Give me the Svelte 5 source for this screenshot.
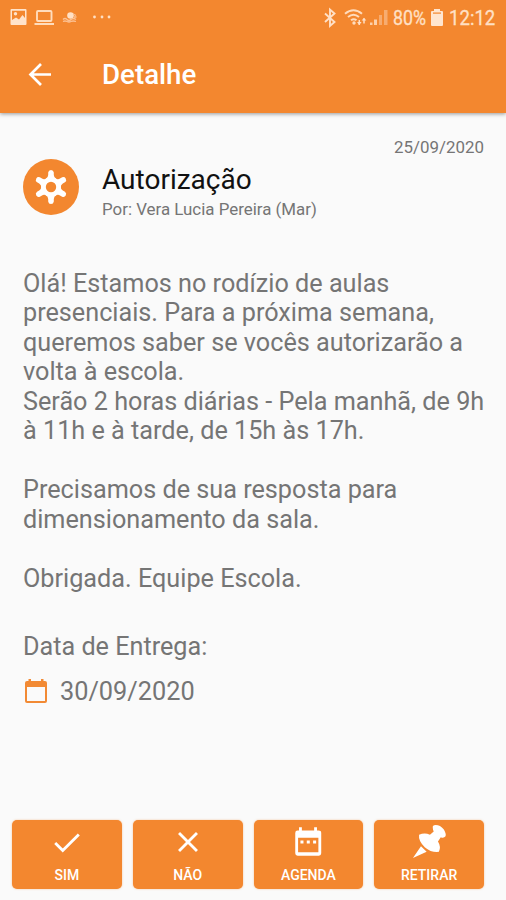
<script>
  const message = [
    'Olá! Estamos no rodízio de aulas',
    'presenciais. Para a próxima semana,',
    'queremos saber se vocês autorizarão a',
    'volta à escola.',
    'Serão 2 horas diárias - Pela manhã, de 9h',
    'à 11h e à tarde, de 15h às 17h.',
    '',
    'Precisamos de sua resposta para',
    'dimensionamento da sala.',
    '',
    'Obrigada. Equipe Escola.'
  ];
  const actions = [
    { id: 'yes', label: 'SIM' },
    { id: 'no', label: 'NÃO' },
    { id: 'agenda', label: 'AGENDA' },
    { id: 'remove', label: 'RETIRAR' }
  ];
</script>

<div class="screen">
  <header>
    <div class="status">
      <svg class="left" width="104" height="18" viewBox="0 0 104 18">
        <path fill="#ffe3cb" fill-rule="evenodd" d="M1.500 0h14q1 0 1 1v14q0 1-1 1h-14q-1 0-1-1V1q0-1 1-1zM2 1.700v9.300l4-2.500 3 2 3.500-4.500 2.500 3V1.700z" />
        <circle cx="5.500" cy="4.800" r="1.700" fill="#ffe3cb" />
        <rect x="27" y="2" width="14.500" height="10" rx="1" fill="none" stroke="#ffdcbc" stroke-width="1.900" />
        <path d="M24.500 15h19.500" stroke="#ffdcbc" stroke-width="2" />
        <circle cx="60.500" cy="6.500" r="3.300" fill="#ffe0c5" />
        <path d="M53 10.500q2-2 4 0t4 0 5 0M53 12.500q2-1 4 0t4 0 5 0M63 5l3 1.500M64 8h2.500" fill="none" stroke="#fcc193" stroke-width="1.300" />
        <circle cx="84.500" cy="8" r="1.400" fill="#ffdfc3" />
        <circle cx="92" cy="8" r="1.400" fill="#ffdfc3" />
        <circle cx="99" cy="8" r="1.400" fill="#ffdfc3" />
      </svg>
      <div class="right">
        <svg width="66" height="20" viewBox="0 0 66 20">
          <path d="M1 5.500l9.500 8.500-4.500 4V1.500l4.500 4L1 14" fill="none" stroke="#ffe0c6" stroke-width="1.900" />
          <path d="M21 5.800q8.500-7 17 0M24 9q5.500-4.500 11 0M27 12.300q2.700-2 5.500 0" fill="none" stroke="#ffdcbd" stroke-width="2" />
          <circle cx="30" cy="15" r="1.700" fill="#ffdcbd" />
          <path d="M35.300 12v5M40 10.500v5" stroke="#ffe0c6" stroke-width="1.500" />
          <path d="M33 14l2.300 3 2.300-3M37.700 12.500l2.300-2.700 2.300 2.700" fill="#ffe0c6" />
          <path d="M46 14.500h2.500V17H46zM50 11.500h3V17h-3z" fill="#fdd0a9" />
          <path d="M55 7h3v10h-3zM60 2h3.500v15H60z" fill="#f7ac70" />
        </svg>
        <span class="pct">80%</span>
        <svg class="battery" width="12" height="18" viewBox="0 0 12 18">
          <path fill="#ffe6d0" d="M3 0h6v2h2q1 0 1 1v13q0 1-1 1H1q-1 0-1-1V3q0-1 1-1h2z" />
          <path fill="#f3872f" d="M2 3.500h8v1.200H2z" />
        </svg>
        <span class="time">12:12</span>
      </div>
    </div>
    <div class="bar">
      <svg width="24" height="24" viewBox="0 0 24 24" fill="none" stroke="#fff" stroke-width="2.700">
        <path d="M23 11.500H2.500M13 1L2.500 11.500 13 22" />
      </svg>
      <h1>Detalhe</h1>
    </div>
  </header>

  <main>
    <time>25/09/2020</time>
    <section class="summary">
      <div class="avatar">
        <svg width="34" height="36" viewBox="-17 -18 34 36">
          {#each [0, 60, 120, 180, 240, 300] as angle}
            <path transform="rotate({angle})" fill="#fff" d="M-5.500-8Q-2.800-9.500-2.800-12V-14.500Q-2.500-17 0-17T2.800-14.500V-12Q2.800-9.500 5.500-8L0 0z" />
          {/each}
          <circle r="9.600" fill="#fff" />
          <circle r="5.200" fill="#f3872f" />
        </svg>
      </div>
      <div class="titles">
        <h2>Autorização</h2>
        <p>Por: Vera Lucia Pereira (Mar)</p>
      </div>
    </section>
    <div class="message">
      {#each message as line}<p>{line}</p>{/each}
    </div>
    <div class="label">Data de Entrega:</div>
    <div class="due">
      <svg width="22" height="24" viewBox="0 0 22 24">
        <path fill="#f28a34" fill-rule="evenodd" d="M3.500 0H6v2h10V0h2.500v2H20q2 0 2 2v18q0 2-2 2H2q-2 0-2-2V4q0-2 2-2h1.500zM2 8v14h18V8z" />
      </svg>
      <span>30/09/2020</span>
    </div>
  </main>

  <footer>
    {#each actions as action}
      <button class={action.id}>
        <svg width="36" height="36" viewBox="0 0 36 36">
          {#if action.id === 'yes'}
            <path d="M5.500 19l8 8L30.500 10" fill="none" stroke="#fff" stroke-width="3" />
          {:else if action.id === 'no'}
            <path d="M8.500 8.500l19 19M27.500 8.500l-19 19" fill="none" stroke="#fff" stroke-width="3" />
          {:else if action.id === 'agenda'}
            <path fill="#fff" fill-rule="evenodd" d="M8.500 3.500h3V7h13V3.500h3V7h1.500Q32 7 32 9.500v21.500q0 2.500-2.500 2.500h-22.500Q4.500 33.500 4.500 31v-21.500Q4.500 7 7 7h1.500zM7.500 14.500v15.500h21.500V14.500z" />
            <path fill="#fff" d="M10 17.500h3.200v3.200H10zM16.700 17.500h3.200v3.200h-3.200zM23.400 17.500h3.200v3.200h-3.200z" />
          {:else}
            <path fill="#fff" d="M22 4Q21.500 1 25 1 30 1 33.500 5.500 36.500 10 35.500 13 33.500 15.500 30.500 14L27.500 18.500Q31 24 28.500 29.500 20.500 30.500 13.500 24.500 6.500 18 7.500 11.500 13.500 8.500 19 11.500L23 8Q22 6 22 4zM9.500 23.500L15.500 29.500 1 36z" />
          {/if}
        </svg>
        <span>{action.label}</span>
      </button>
    {/each}
  </footer>
</div>

<style>
  :global(body) { margin: 0; background: #fafafa; }
  .screen { width: 506px; height: 900px; display: flex; flex-direction: column; background: #fafafa; font-family: Roboto, "Liberation Sans", sans-serif; color: #757575; overflow: hidden; }
  h1, h2, p { margin: 0; font-weight: 400; white-space: nowrap; }
  svg { display: block; flex: none; overflow: visible; }
  header { height: 113px; flex: none; background: #f3872f; box-shadow: 0 1px 4px rgba(0, 0, 0, .4); }
  .status { height: 36px; display: flex; justify-content: space-between; padding: 0 10px; box-sizing: border-box; }
  .left { margin-top: 9px; }
  .right { display: flex; height: 36px; width: 172px; color: #ffe0c5; font-size: 20px; line-height: 36px; }
  .right > svg:first-child { margin-top: 8px; }
  .pct, .time { transform: scaleX(.89); transform-origin: left; white-space: nowrap; -webkit-text-stroke: .3px #ffe0c5; }
  .pct { width: 39px; margin-left: 3px; }
  .battery { margin-top: 9px; }
  .time { width: 47px; margin-left: 6px; transform: scaleX(.93); }
  .bar { height: 77px; display: flex; align-items: center; padding-left: 28px; }
  h1 { margin-left: 50px; color: #fff; font-size: 27.7px; font-weight: 500; line-height: 34px; }
  main { flex: 1; padding: 24px 22px 0 23px; }
  time { display: block; text-align: right; font-size: 16.9px; line-height: 20px; }
  .summary { display: flex; height: 62px; }
  .avatar { width: 56px; height: 56px; margin-top: 2px; border-radius: 50%; background: #f3872f; display: flex; align-items: center; justify-content: center; }
  .titles { margin-left: 23px; padding-top: 6px; }
  h2 { font-size: 28px; line-height: 34px; color: #111; }
  .titles p { font-size: 16.9px; line-height: 20px; margin-top: 2px; }
  .message { margin-top: 49.6px; font-size: 25.22px; line-height: 29.55px; }
  .message p { height: 29.55px; }
  .label { margin-top: 38.400px; font-size: 25.2px; line-height: 30px; }
  .due { display: flex; align-items: center; height: 30px; margin-top: 14px; font-size: 25.3px; padding-left: 2px; }
  .due span { margin-left: 13px; }
  footer { display: flex; gap: 11px; padding: 0 22px 11px 12px; }
  button { flex: 1; height: 69px; padding: 4px 0 0; border: 0; border-radius: 5px; background: #f3872f; color: #fff; font: 500 14px/18px Roboto, sans-serif; display: flex; flex-direction: column; align-items: center; box-shadow: 0 0 2px rgba(245, 136, 48, .5); }
  button svg { width: 34px; height: 34px; margin: 1px 0 7px; }
  button.agenda svg, button.remove svg { margin: 0 0 8px; }
</style>
